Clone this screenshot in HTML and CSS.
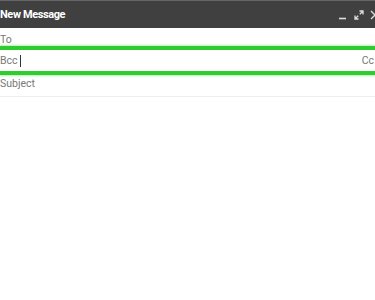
FILE: index.html
```html
<!DOCTYPE html>
<html lang="en">
<head>
    <meta charset="UTF-8">
    <meta name="viewport" content="width=device-width, initial-scale=1.0">
    <title>New Message</title>
    <link rel="stylesheet" href="styles.css">
</head>
<body>
    <div class="compose">
        <div class="compose-header">
            <span class="title">New Message</span>
            <div class="actions">
                <svg class="icon" width="10" height="10" viewBox="0 0 10 10">
                    <path d="M1 8.5h7" stroke="#ddd" stroke-width="1.6"/>
                </svg>
                <svg class="icon" width="10" height="10" viewBox="0 0 10 10">
                    <path d="M5.5 1h3.5v3.5M9 1L5.8 4.2M4.5 9H1V5.5M1 9l3.2-3.2" stroke="#ddd" stroke-width="1.3" fill="none"/>
                </svg>
                <svg class="icon" width="10" height="10" viewBox="0 0 10 10">
                    <path d="M1 1l8 8M9 1L1 9" stroke="#ddd" stroke-width="1.4"/>
                </svg>
            </div>
        </div>
        <div class="field to">To</div>
        <div class="field highlighted">
            <span>Bcc <span class="cursor"></span></span>
            <span class="cc">Cc</span>
        </div>
        <div class="field subject">Subject</div>
    </div>
</body>
</html>
```

FILE: styles.css
```css
body {
    margin: 0;
    padding: 0;
    background: #fff;
    font-family: Roboto, Arial, sans-serif;
}
.compose {
    width: 375px;
}
.compose-header {
    display: flex;
    align-items: center;
    justify-content: space-between;
    height: 27px;
    background-color: #404040;
    border-top: 1px solid #666;
}
.title {
    color: #fff;
    font-size: 11px;
    font-weight: 700;
    letter-spacing: -0.4px;
}
.actions {
    display: flex;
    gap: 6px;
    margin-right: -5px;
}
.icon {
    display: block;
}
.field {
    display: flex;
    align-items: center;
    justify-content: space-between;
    color: #777;
    font-size: 10.5px;
}
.to {
    height: 14px;
    padding-top: 4px;
}
.highlighted {
    height: 21px;
    border-top: 4px solid #2ecc2e;
    border-bottom: 4px solid #2ecc2e;
    box-shadow: 0 -1px 2px rgba(46, 204, 46, 0.35), 0 1px 2px rgba(46, 204, 46, 0.35);
}
.cursor {
    display: inline-block;
    width: 1px;
    height: 12px;
    background: #333;
    vertical-align: middle;
}
.cc {
    margin-right: 1px;
}
.subject {
    height: 17px;
    padding-bottom: 4px;
    border-bottom: 1px solid #eee;
}
```
